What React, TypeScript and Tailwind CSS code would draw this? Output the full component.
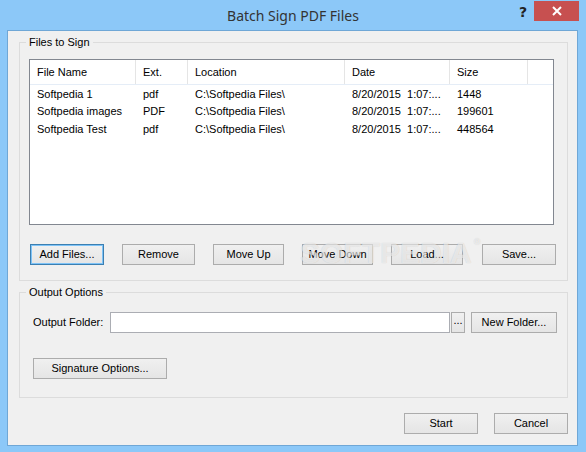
import React from "react"

// column layout of the list view (px widths incl. the 1px divider on the right)
const columns = [
  { key: "name", label: "File Name", width: 106 },
  { key: "ext", label: "Ext.", width: 52 },
  { key: "loc", label: "Location", width: 157 },
  { key: "date", label: "Date", width: 105 },
  { key: "size", label: "Size", width: 78 },
]

const files = [
  { name: "Softpedia 1", ext: "pdf", loc: "C:\\Softpedia Files\\", date: "8/20/2015  1:07:...", size: "1448" },
  { name: "Softpedia images", ext: "PDF", loc: "C:\\Softpedia Files\\", date: "8/20/2015  1:07:...", size: "199601" },
  { name: "Softpedia Test", ext: "pdf", loc: "C:\\Softpedia Files\\", date: "8/20/2015  1:07:...", size: "448564" },
]

function Btn({ children, className = "", focused = false }: { children: React.ReactNode; className?: string; focused?: boolean }) {
  return (
    <button
      className={`h-[21px] flex items-center justify-center border bg-linear-to-b from-[#f0f0f0] to-[#e5e5e5] text-[11px] text-black ${
        focused ? "border-[#3c7fb1] outline outline-1 -outline-offset-2 outline-[#7ec3f7]" : "border-[#acacac]"
      } ${className}`}
    >
      {children}
    </button>
  )
}

export default function App() {
  return (
    <div
      className="w-[586px] h-[452px] bg-[#8cc8f8] flex flex-col overflow-hidden text-[11px] text-black"
      style={{ fontFamily: '"Liberation Sans", Arial, sans-serif' }}
    >
      {/* title bar */}
      <div className="h-[30px] flex items-start relative">
        <div
          className="flex-1 text-center text-[14px] text-[#333] pt-[5px]"
          style={{ fontFamily: '"Noto Sans", sans-serif' }}
        >
          Batch Sign PDF Files
        </div>
        <div
          className="absolute left-[519px] top-[2px] text-[14px] font-bold text-[#222]"
          style={{ fontFamily: '"DejaVu Sans", sans-serif' }}
        >
          ?
        </div>
        <div className="absolute left-[534px] top-[1px] w-[45px] h-[20px] bg-[#c75050] flex items-center justify-center">
          <svg width="10" height="10" viewBox="0 0 10 10">
            <path d="M1 1 L9 9 M9 1 L1 9" stroke="white" strokeWidth="2" />
          </svg>
        </div>
      </div>

      {/* client area */}
      <div className="ml-[7px] mr-[8px] mb-[6px] flex-1 bg-[#f0f0f0] border border-[#6fa7d6] flex flex-col relative">
        <fieldset className="ml-[11px] mt-[5px] w-[549px] border border-[#dcdcdc] pb-[15px]">
          <legend className="ml-[6px] px-[3px] leading-[13px]">Files to Sign</legend>

          <div className="ml-[9px] mt-[10px] w-[525px] h-[166px] border border-[#828790] bg-white">
            <div className="flex h-[25px] border-b border-[#e5edf7]">
              {columns.map((c) => (
                <div
                  key={c.key}
                  className="h-full flex items-center pl-[7px] border-r border-[#e5e5e5]"
                  style={{ width: c.width }}
                >
                  {c.label}
                </div>
              ))}
            </div>
            <div>
              {files.map((f) => (
                <div key={f.name} className="flex h-[17.5px] items-center whitespace-pre">
                  {columns.map((c) => (
                    <div key={c.key} className="pl-[7px]" style={{ width: c.width }}>
                      {f[c.key as keyof typeof f]}
                    </div>
                  ))}
                </div>
              ))}
            </div>
          </div>

          <div className="flex mt-[19px] ml-[10px]">
            <Btn focused className="w-[74px]">Add Files...</Btn>
            <Btn className="w-[73px] ml-[18px]">Remove</Btn>
            <Btn className="w-[71px] ml-[18px]">Move Up</Btn>
            <Btn className="w-[71px] ml-[18px]">Move Down</Btn>
            <Btn className="w-[72px] ml-[18px]">Load...</Btn>
            <Btn className="w-[74px] ml-[19px]">Save...</Btn>
          </div>
        </fieldset>

        <fieldset className="ml-[11px] mt-[5px] w-[549px] border border-[#dcdcdc] pb-[18px]">
          <legend className="ml-[6px] px-[3px] leading-[13px]">Output Options</legend>
          <div className="flex items-center mt-[13px] ml-[13px]">
            <div className="w-[77px]">Output Folder:</div>
            <div className="w-[340px] h-[21px] bg-white border border-[#abadb3]" />
            <Btn className="w-[14px] ml-[1px] pb-[4px]">...</Btn>
            <Btn className="w-[86px] ml-[6px]">New Folder...</Btn>
          </div>
          <div className="mt-[25px] ml-[13px]">
            <Btn className="w-[134px]">Signature Options...</Btn>
          </div>
        </fieldset>

        <div className="flex justify-end mt-[15px] mr-[9px]">
          <Btn className="w-[74px]">Start</Btn>
          <Btn className="w-[74px] ml-[16px]">Cancel</Btn>
        </div>

        {/* watermark */}
        <div className="absolute left-[292px] top-[207px] text-[30px] leading-none font-bold text-white/60 [text-shadow:0_0_1px_rgba(0,0,0,0.18)] pointer-events-none select-none">
          SOFTPEDIA<span className="text-[9px] align-top ml-[2px]">®</span>
        </div>
      </div>
    </div>
  )
}
